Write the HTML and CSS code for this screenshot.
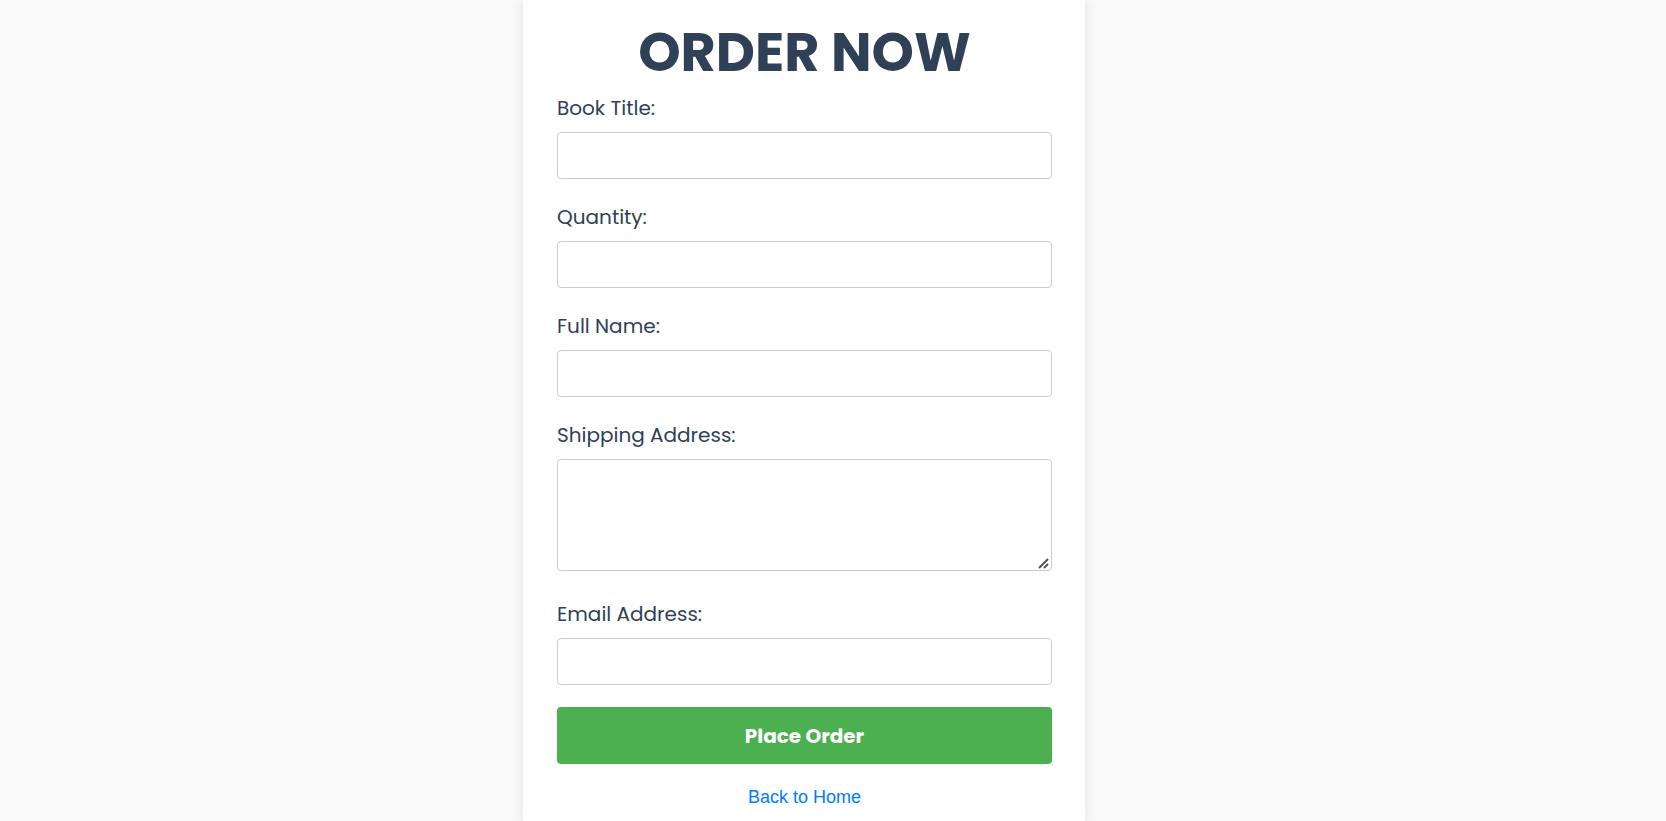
FILE: index.html
```html
<!DOCTYPE html>
<html lang="en">
<head>
<meta charset="utf-8">
<meta name="viewport" content="width=device-width, initial-scale=1">
<title>Order Now</title>
<link rel="stylesheet" href="styles.css">
</head>
<body>
<main class="order-card">
  <h1 class="order-title">ORDER NOW</h1>
  <form class="order-form">
    <div class="field">
      <label for="book-title">Book Title:</label>
      <input type="text" id="book-title" name="book-title">
    </div>
    <div class="field">
      <label for="quantity">Quantity:</label>
      <input type="number" id="quantity" name="quantity">
    </div>
    <div class="field">
      <label for="full-name">Full Name:</label>
      <input type="text" id="full-name" name="full-name">
    </div>
    <div class="field field-multiline">
      <label for="address">Shipping Address:</label>
      <textarea id="address" name="address"></textarea>
    </div>
    <div class="field">
      <label for="email">Email Address:</label>
      <input type="email" id="email" name="email">
    </div>
    <button type="submit" class="submit-button">Place Order</button>
  </form>
  <a class="home-link" href="#">Back to Home</a>
</main>
</body>
</html>
```
FILE: styles.css
```css
* {
  box-sizing: border-box;
}

body {
  display: flex;
  justify-content: center;
  min-height: 100vh;
  margin: 0;
  padding-right: 58px;
  background: #f9f9f9;
  color: #2e4156;
  font-family: Poppins, Inter, sans-serif;
}

.order-card {
  width: 100%;
  max-width: 562px;
  padding: 20px 33px 8px 34px;
  background: #fff;
  box-shadow: 0 0 11px rgba(0, 0, 0, 0.1);
}

.order-title {
  margin: 0 0 8px;
  font-size: 54px;
  font-weight: 700;
  line-height: 64px;
  text-align: center;
  white-space: nowrap;
}

.order-form {
  display: flex;
  flex-direction: column;
  gap: 22px;
}

.field {
  display: flex;
  flex-direction: column;
  gap: 8px;
}

.field-multiline {
  padding-bottom: 5px;
}

.field label {
  font-size: 20px;
  line-height: 32px;
}

.field input,
.field textarea {
  width: 100%;
  height: 47px;
  padding: 12px;
  border: 1px solid #ccc;
  border-radius: 4px;
  background: #fff;
  font: inherit;
  font-size: 16px;
}

.field input[type="number"] {
  appearance: textfield;
}

.field textarea {
  height: 112px;
  resize: vertical;
}

.field textarea::-webkit-resizer {
  background: url("data:image/svg+xml,%3Csvg xmlns='http://www.w3.org/2000/svg' width='15' height='15'%3E%3Cpath d='M3 13L12 4M8 13L12 9' stroke='%23555' stroke-width='2'/%3E%3C/svg%3E") right bottom no-repeat;
}

.submit-button {
  height: 57px;
  border: 0;
  border-radius: 4px;
  background: #4caf50;
  color: #fff;
  font: inherit;
  font-size: 20px;
  font-weight: 700;
  cursor: pointer;
}

.home-link {
  display: block;
  margin-top: 22px;
  color: #007bff;
  font-family: "Liberation Sans", Arial, sans-serif;
  font-size: 18px;
  line-height: 22px;
  text-align: center;
  text-decoration: none;
}
```
